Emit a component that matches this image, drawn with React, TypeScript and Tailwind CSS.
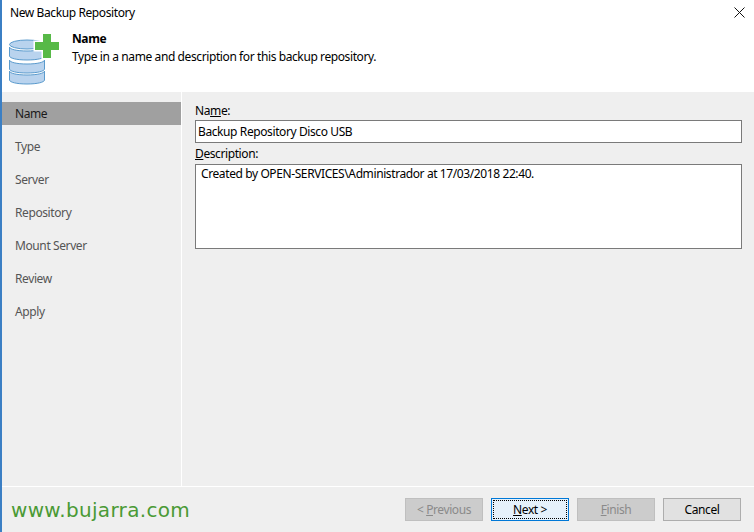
const font = { fontFamily: '"Noto Sans", sans-serif', letterSpacing: "-0.4px" };

const steps = ["Name", "Type", "Server", "Repository", "Mount Server", "Review", "Apply"];

function RepoIcon() {
  return (
    <svg width="54" height="54" viewBox="0 0 54 54" className="block">
      {[43, 32, 19].map((y) => (
        <path key={y} d={`M1.5 ${y - 5}v9c0 2.2 7 4 17.5 4s17.5-1.8 17.5-4v-9c0 2.2-7 4-17.5 4s-17.5-1.8-17.5-4z`} fill="#b9d3ee" stroke="#5b9bcd" />
      ))}
      <ellipse cx="19" cy="11.5" rx="17.5" ry="4.5" fill="#b9d3ee" stroke="#5b9bcd" />
      <path d="M25.5 7.5h8v-8h11v8h8v11h-8v8h-11v-8h-8z" fill="#fff" />
      <path d="M27 9h8v-8h8v8h8v8h-8v8h-8v-8h-8z" fill="#57b947" />
    </svg>
  );
}

function Button({ children, variant }: { children: React.ReactNode; variant: "disabled" | "focus" | "normal" }) {
  const cls =
    variant === "disabled"
      ? "bg-[#cccccc] border-[#bfbfbf] text-[#8a8a8a]"
      : variant === "focus"
        ? "bg-[#e5f1fb] border-[#0078d7] text-black"
        : "bg-[#e1e1e1] border-[#adadad] text-black";
  return (
    <div className={`relative flex h-[23px] w-[78px] items-center justify-center border text-[12px] ${cls}`}>
      {variant === "focus" && <div className="absolute inset-[1px] border border-dotted border-black" />}
      <span>{children}</span>
    </div>
  );
}

export default function App() {
  return (
    <div className="flex h-[532px] w-[754px] flex-col overflow-hidden border-l-2 border-[#3b7fc4] bg-white text-black" style={font}>
      {/* title bar */}
      <div className="flex h-[26px] items-center justify-between pl-2 pr-[9px] text-[12px]">
        <span>New Backup Repository</span>
        <svg width="11" height="11" viewBox="0 0 11 11" className="mt-[-2px]">
          <path d="M0.5 0.5l10 10M10.5 0.5l-10 10" stroke="#111" fill="none" />
        </svg>
      </div>

      {/* header */}
      <div className="flex h-[66px]">
        <div className="ml-[6px] mt-[7px] w-[64px] shrink-0">
          <RepoIcon />
        </div>
        <div className="pt-[4px] text-[12px] leading-[18px]">
          <div className="font-bold">Name</div>
          <div>Type in a name and description for this backup repository.</div>
        </div>
      </div>

      <div className="flex min-h-0 flex-1 bg-[#efefef]">
        {/* steps */}
        <div className="w-[180px] shrink-0 border-r border-white pt-[10px] text-[12px]">
          {steps.map((s, i) => (
            <div
              key={s}
              className={`flex h-[23px] items-center pl-[13px] ${i === 0 ? "bg-[#a0a0a0] text-[#1a1a1a]" : "text-[#555555]"} ${i === steps.length - 1 ? "" : "mb-[10px]"}`}
            >
              {s}
            </div>
          ))}
        </div>

        {/* form */}
        <div className="flex-1 pl-[13px] pr-[12px] pt-[9px] text-[12px]">
          <div className="h-[19px] leading-[19px]">
            Na<span className="underline">m</span>e:
          </div>
          <div className="flex h-[23px] items-center border border-[#7a7a7a] bg-white pl-[2px]">Backup Repository Disco USB</div>
          <div className="mt-[1px] h-[20px] leading-[19px]">
            <span className="underline">D</span>escription:
          </div>
          <div className="h-[85px] border border-[#7a7a7a] bg-white pl-[5px]">
            Created by OPEN-SERVICES\Administrador at 17/03/2018 22:40.
          </div>
        </div>
      </div>

      {/* footer */}
      <div className="flex h-[46px] items-center justify-between border-t border-white bg-[#efefef] pr-[13px]">
        <span className="ml-[9px] text-[20px] tracking-[0.33px] text-[#4a9a35]" style={{ fontFamily: '"DejaVu Sans", sans-serif' }}>
          www.bujarra.com
        </span>
        <div className="flex gap-2">
          <Button variant="disabled">
            &lt; <span className="underline">P</span>revious
          </Button>
          <Button variant="focus">
            <span className="underline">N</span>ext &gt;
          </Button>
          <Button variant="disabled">
            <span className="underline">F</span>inish
          </Button>
          <Button variant="normal">Cancel</Button>
        </div>
      </div>
    </div>
  );
}
